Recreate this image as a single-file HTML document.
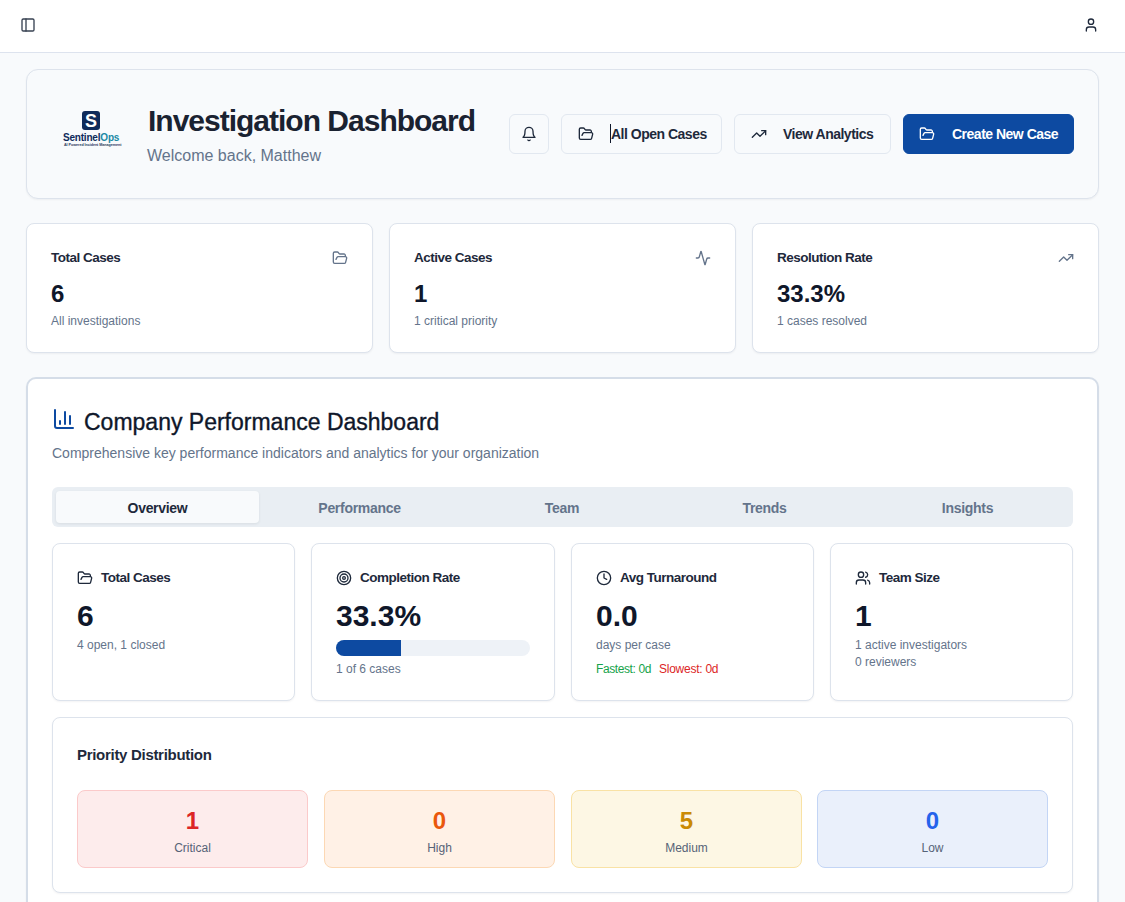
<!DOCTYPE html>
<html><head><meta charset="utf-8">
<style>
*{box-sizing:border-box;margin:0;padding:0}
html,body{width:1125px;height:902px;overflow:hidden}
body{font-family:"Liberation Sans",sans-serif;background:#f8fafc;color:#1e293b;position:relative}
.abs{position:absolute}
svg{display:block}
.ic{fill:none;stroke:currentColor;stroke-width:2;stroke-linecap:round;stroke-linejoin:round}
#topbar{position:absolute;left:0;top:0;width:1125px;height:53px;background:#fff;border-bottom:1px solid #dde3ee}
.card{position:absolute;background:#fff;border:1px solid #dde3ec;border-radius:8px;box-shadow:0 1px 2px rgba(15,23,42,.05)}
#hdr{left:26px;top:69px;width:1073px;height:130px;background:#f8fafc;border-radius:12px}
.btn{position:absolute;top:44px;height:40px;border:1px solid #e2e8f0;border-radius:6px;background:#f8fafc;font-weight:bold;font-size:14px;letter-spacing:-0.5px;color:#1e293b}
.btn span{position:absolute;top:11px;white-space:nowrap}
.btn svg{position:absolute;top:11px}
.stat .t{position:absolute;left:24px;top:26px;font-size:13.5px;letter-spacing:-0.5px;font-weight:bold;color:#1e293b;white-space:nowrap}
.stat .v{position:absolute;left:24px;top:56px;font-size:24px;font-weight:bold;color:#0f172a}
.stat .s{position:absolute;left:24px;top:90px;font-size:12px;color:#64748b;white-space:nowrap}
.stat svg{position:absolute;left:305px;top:26px;color:#64748b}
#panel{left:26px;top:377px;width:1073px;height:600px;border:2px solid #d5dde8;border-radius:10px}
.tabs{position:absolute;left:24px;top:108px;width:1021px;height:40px;background:#e9eef3;border-radius:6px}
.tab{position:absolute;top:4px;width:202px;height:32px;text-align:center;font-size:14px;letter-spacing:-0.3px;font-weight:bold;color:#64748b;line-height:34px}
.tab.on{background:#f8fafc;color:#1e293b;border-radius:4px;box-shadow:0 1px 3px rgba(15,23,42,.08)}
.kpi{top:164px;height:158px;width:244px}
.kpi .t{position:absolute;left:48px;top:26px;font-size:13.5px;letter-spacing:-0.5px;font-weight:bold;white-space:nowrap;color:#1e293b}
.kpi svg{position:absolute;left:24px;top:26px;color:#1e293b}
.kpi .v{position:absolute;left:24px;top:55px;font-size:30px;font-weight:bold;color:#0f172a}
.kpi .s{position:absolute;left:24px;font-size:12px;color:#64748b;white-space:nowrap}
.pbox{position:absolute;top:72px;width:231px;height:78px;border:1px solid;border-radius:8px;text-align:center}
.pbox .n{position:absolute;left:0;right:0;top:16px;font-size:24px;font-weight:bold}
.pbox .l{position:absolute;left:0;right:0;top:50px;font-size:12px;color:#566377}
</style></head>
<body>
<div id="topbar">
  <svg class="ic abs" style="left:20px;top:17px;color:#374151" width="16" height="16" viewBox="0 0 24 24"><rect x="3" y="3" width="18" height="18" rx="2"/><path d="M9 3v18"/></svg>
  <svg class="ic abs" style="left:1083px;top:17px;color:#1e293b" width="16" height="16" viewBox="0 0 24 24"><path d="M19 21v-2a4 4 0 0 0-4-4H9a4 4 0 0 0-4 4v2"/><circle cx="12" cy="7" r="4"/></svg>
</div>

<div id="hdr" class="card">
  <!-- logo -->
  <div class="abs" style="left:55px;top:41px;width:18px;height:19px;background:#0f2b5b;border-radius:3px;color:#fff;font-weight:bold;font-size:18px;text-align:center;line-height:20px">S</div>
  <div class="abs" style="left:36px;top:62px;font-size:10px;font-weight:bold;color:#0f2b5b;white-space:nowrap;letter-spacing:-0.2px">Sentinel<span style="color:#1b8aa6">Ops</span></div>
  <div class="abs" style="left:37px;top:73px;font-size:3.7px;line-height:5px;font-weight:bold;color:#2a3a5e;white-space:nowrap;letter-spacing:-0.05px">AI Powered Incident Management</div>
  <div class="abs" style="left:121px;top:34px;font-size:30px;letter-spacing:-1px;font-weight:bold;color:#1a2231;white-space:nowrap">Investigation Dashboard</div>
  <div class="abs" style="left:120px;top:77px;font-size:16px;color:#64748b;white-space:nowrap">Welcome back, Matthew</div>

  <div class="btn" style="left:482px;width:40px">
    <svg class="ic" style="left:11px;color:#1e293b" width="16" height="16" viewBox="0 0 24 24"><path d="M6 8a6 6 0 0 1 12 0c0 7 3 9 3 9H3s3-2 3-9"/><path d="M10.3 21a1.94 1.94 0 0 0 3.4 0"/></svg>
  </div>
  <div class="btn" style="left:534px;width:161px">
    <svg class="ic" style="left:16px;color:#1e293b" width="16" height="16" viewBox="0 0 24 24"><path d="m6 14 1.5-2.9A2 2 0 0 1 9.24 10H20a2 2 0 0 1 1.94 2.5l-1.54 6a2 2 0 0 1-1.95 1.5H4a2 2 0 0 1-2-2V5a2 2 0 0 1 2-2h3.9a2 2 0 0 1 1.69.9l.81 1.2a2 2 0 0 0 1.67.9H18a2 2 0 0 1 2 2v2"/></svg>
    <i class="abs" style="left:48px;top:9px;width:1px;height:19px;background:#0f172a"></i><span style="left:49px">All Open Cases</span>
  </div>
  <div class="btn" style="left:707px;width:157px">
    <svg class="ic" style="left:16px;color:#1e293b" width="16" height="16" viewBox="0 0 24 24"><path d="M16 7h6v6"/><path d="m22 7-8.5 8.5-5-5L2 17"/></svg>
    <span style="left:48px">View Analytics</span>
  </div>
  <div class="btn" style="left:876px;width:171px;background:#0d4aa1;border-color:#0d4aa1;color:#fff">
    <svg class="ic" style="left:15px;color:#fff" width="16" height="16" viewBox="0 0 24 24"><path d="m6 14 1.5-2.9A2 2 0 0 1 9.24 10H20a2 2 0 0 1 1.94 2.5l-1.54 6a2 2 0 0 1-1.95 1.5H4a2 2 0 0 1-2-2V5a2 2 0 0 1 2-2h3.9a2 2 0 0 1 1.69.9l.81 1.2a2 2 0 0 0 1.67.9H18a2 2 0 0 1 2 2v2"/></svg>
    <span style="left:48px">Create New Case</span>
  </div>
</div>

<!-- stat cards -->
<div class="card stat" style="left:26px;top:223px;width:347px;height:130px">
  <div class="t">Total Cases</div>
  <svg class="ic" width="16" height="16" viewBox="0 0 24 24"><path d="m6 14 1.5-2.9A2 2 0 0 1 9.24 10H20a2 2 0 0 1 1.94 2.5l-1.54 6a2 2 0 0 1-1.95 1.5H4a2 2 0 0 1-2-2V5a2 2 0 0 1 2-2h3.9a2 2 0 0 1 1.69.9l.81 1.2a2 2 0 0 0 1.67.9H18a2 2 0 0 1 2 2v2"/></svg>
  <div class="v">6</div>
  <div class="s">All investigations</div>
</div>
<div class="card stat" style="left:389px;top:223px;width:347px;height:130px">
  <div class="t">Active Cases</div>
  <svg class="ic" width="16" height="16" viewBox="0 0 24 24"><path d="M22 12h-2.48a2 2 0 0 0-1.93 1.46l-2.35 8.36a.25.25 0 0 1-.48 0L9.24 2.18a.25.25 0 0 0-.48 0l-2.35 8.36A2 2 0 0 1 4.49 12H2"/></svg>
  <div class="v">1</div>
  <div class="s">1 critical priority</div>
</div>
<div class="card stat" style="left:752px;top:223px;width:347px;height:130px">
  <div class="t">Resolution Rate</div>
  <svg class="ic" width="16" height="16" viewBox="0 0 24 24"><path d="M16 7h6v6"/><path d="m22 7-8.5 8.5-5-5L2 17"/></svg>
  <div class="v">33.3%</div>
  <div class="s">1 cases resolved</div>
</div>

<!-- panel -->
<div id="panel" class="card">
  <svg class="ic abs" style="left:24px;top:28px;color:#0d4aa1" width="24" height="24" viewBox="0 0 24 24"><path d="M3 3v16a2 2 0 0 0 2 2h16"/><path d="M18 17V9"/><path d="M13 17V5"/><path d="M8 17v-3"/></svg>
  <div class="abs" style="left:56px;top:30px;font-size:23px;color:#0f172a;-webkit-text-stroke:0.35px #0f172a;white-space:nowrap">Company Performance Dashboard</div>
  <div class="abs" style="left:24px;top:66px;font-size:14px;color:#64748b;white-space:nowrap">Comprehensive key performance indicators and analytics for your organization</div>
  <div class="tabs">
    <div class="tab on" style="left:4px;width:203px">Overview</div>
    <div class="tab" style="left:206px;width:203px">Performance</div>
    <div class="tab" style="left:409px;width:202px">Team</div>
    <div class="tab" style="left:611px;width:203px">Trends</div>
    <div class="tab" style="left:814px;width:203px">Insights</div>
  </div>

  <div class="card kpi" style="left:24px;width:243px">
    <svg class="ic" width="16" height="16" viewBox="0 0 24 24"><path d="m6 14 1.5-2.9A2 2 0 0 1 9.24 10H20a2 2 0 0 1 1.94 2.5l-1.54 6a2 2 0 0 1-1.95 1.5H4a2 2 0 0 1-2-2V5a2 2 0 0 1 2-2h3.9a2 2 0 0 1 1.69.9l.81 1.2a2 2 0 0 0 1.67.9H18a2 2 0 0 1 2 2v2"/></svg>
    <div class="t">Total Cases</div>
    <div class="v">6</div>
    <div class="s" style="top:94px">4 open, 1 closed</div>
  </div>
  <div class="card kpi" style="left:283px">
    <svg class="ic" width="16" height="16" viewBox="0 0 24 24"><circle cx="12" cy="12" r="10"/><circle cx="12" cy="12" r="6"/><circle cx="12" cy="12" r="2"/></svg>
    <div class="t">Completion Rate</div>
    <div class="v">33.3%</div>
    <div class="abs" style="left:24px;top:96px;width:194px;height:16px;background:#eef2f7;border-radius:8px;overflow:hidden"><div style="width:65px;height:16px;background:#0d4aa1"></div></div>
    <div class="s" style="top:118px">1 of 6 cases</div>
  </div>
  <div class="card kpi" style="left:543px;width:243px">
    <svg class="ic" width="16" height="16" viewBox="0 0 24 24"><circle cx="12" cy="12" r="10"/><path d="M12 6v6l4 2"/></svg>
    <div class="t">Avg Turnaround</div>
    <div class="v">0.0</div>
    <div class="s" style="top:94px">days per case</div>
    <div class="s" style="top:118px"><span style="color:#16a34a;letter-spacing:-0.4px">Fastest: 0d</span><span style="position:absolute;left:63px;color:#dc2626;letter-spacing:-0.25px">Slowest: 0d</span></div>
  </div>
  <div class="card kpi" style="left:802px;width:243px">
    <svg class="ic" width="16" height="16" viewBox="0 0 24 24"><path d="M16 21v-2a4 4 0 0 0-4-4H6a4 4 0 0 0-4 4v2"/><circle cx="9" cy="7" r="4"/><path d="M22 21v-2a4 4 0 0 0-3-3.87"/><path d="M16 3.13a4 4 0 0 1 0 7.75"/></svg>
    <div class="t">Team Size</div>
    <div class="v">1</div>
    <div class="s" style="top:94px">1 active investigators</div>
    <div class="s" style="top:111px">0 reviewers</div>
  </div>

  <div class="card" style="left:24px;top:338px;width:1021px;height:176px">
    <div class="abs" style="left:24px;top:28px;font-size:15px;letter-spacing:-0.3px;font-weight:bold;color:#1e293b;white-space:nowrap">Priority Distribution</div>
    <div class="pbox" style="left:24px;background:#fdecec;border-color:#fbcaca"><div class="n" style="color:#dc2626">1</div><div class="l">Critical</div></div>
    <div class="pbox" style="left:271px;background:#fff1e6;border-color:#fcd8b4"><div class="n" style="color:#ea580c">0</div><div class="l">High</div></div>
    <div class="pbox" style="left:518px;background:#fdf7e4;border-color:#f9e2a5"><div class="n" style="color:#ca8a04">5</div><div class="l">Medium</div></div>
    <div class="pbox" style="left:764px;background:#eaf0fb;border-color:#c3d5f5"><div class="n" style="color:#2563eb">0</div><div class="l">Low</div></div>
  </div>
</div>
</body></html>
